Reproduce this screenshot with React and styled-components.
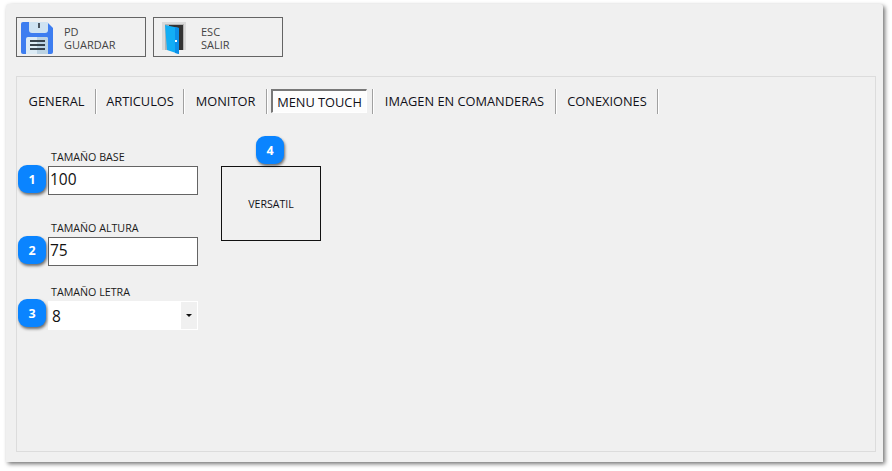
import React from 'react';
import styled, { createGlobalStyle } from 'styled-components';

const Global = createGlobalStyle`
  html, body { margin: 0; padding: 0; background: #fff; }
  body { font-family: "Open Sans", "Noto Sans", sans-serif; color: #101018; }
`;

const Page = styled.div`
  width: 892px;
  height: 471px;
  padding: 4px 0 0 6px;
  box-sizing: border-box;
  overflow: hidden;
`;

const Window = styled.div`
  width: 877px;
  height: 458px;
  box-sizing: border-box;
  background: #f0f0f0;
  border-radius: 3px 3px 0 0;
  box-shadow: 2px 2px 4px rgba(0, 0, 0, 0.55);
  padding: 13px 7px 10px 10px;
  display: flex;
  flex-direction: column;
`;

const Toolbar = styled.div`
  display: flex;
  gap: 7px;
  height: 40px;
  margin-bottom: 19px;
`;

const ToolButton = styled.div`
  width: 130px;
  height: 40px;
  box-sizing: border-box;
  border: 1px solid #646464;
  display: flex;
  align-items: center;
  padding-left: 4px;
`;

const ToolIcon = styled.svg`
  width: 32px;
  height: 32px;
  flex: none;
  margin-top: 2px;
`;

const ToolText = styled.div`
  margin: 2px 0 0 11px;
  font-size: 11px;
  line-height: 13px;
  color: #444;
`;

const Panel = styled.div`
  flex: 1;
  border: 1px solid #dcdcdc;
  padding: 12px 0 0 0;
  display: flex;
  flex-direction: column;
`;

const Tabs = styled.div`
  display: flex;
  height: 25px;
`;

const Tab = styled.div`
  width: ${p => p.$w}px;
  box-sizing: border-box;
  padding-left: 1px;
  border-right: 1px solid #a0a0a0;
  box-shadow: 1px 0 0 #fff;
  font-size: 12.8px;
  line-height: 25px;
  text-align: center;
  white-space: nowrap;
`;

const ActiveTab = styled.div`
  width: 96px;
  height: 24px;
  margin: 0 0 0 4px;
  box-sizing: border-box;
  border: 1px solid #fff;
  border-top: 2px solid #787878;
  border-left: 2px solid #787878;
  background: #fdfdfd;
  font-size: 12.8px;
  line-height: 23px;
  text-align: center;
  white-space: nowrap;
`;

const Body = styled.div`
  display: flex;
  margin-top: 36px;
  padding-left: 31px;
  gap: 23px;
`;

const Fields = styled.div`
  width: 150px;
  display: flex;
  flex-direction: column;
`;

const Field = styled.div`
  position: relative;
  margin-top: ${p => p.$top || 0}px;
`;

const Label = styled.div`
  font-size: 10.7px;
  line-height: 14px;
  height: 14px;
  margin-left: 3px;
  margin-bottom: 2px;
  color: #1a1a1a;
`;

const TextBox = styled.div`
  height: 29px;
  box-sizing: border-box;
  background: #fff;
  border: 1px solid #646464;
  font-size: 15.5px;
  line-height: 25px;
  padding-left: 1px;
  color: #111;
`;

const SelectBox = styled.div`
  height: 29px;
  background: #fff;
  display: flex;
  font-size: 15.5px;
  line-height: 30px;
  padding-left: 4px;
  color: #111;
`;

const SelectValue = styled.div`
  flex: 1;
`;

const SelectArrow = styled.div`
  width: 16px;
  margin: 1px 1px 1px 0;
  background: #f0f0f0;
  display: flex;
  align-items: center;
  justify-content: center;
  &::after {
    content: '';
    border-left: 3px solid transparent;
    border-right: 3px solid transparent;
    border-top: 3px solid #111;
  }
`;

const Badge = styled.div`
  position: absolute;
  left: ${p => p.$left}px;
  top: ${p => p.$top}px;
  width: 28px;
  height: 28px;
  border-radius: 9px;
  background: #0a84ff;
  color: #fff;
  font-size: 12.5px;
  font-weight: 700;
  line-height: 29px;
  text-align: center;
  box-shadow: 1px 2px 3px rgba(0, 0, 0, 0.55);
`;

const PreviewWrap = styled.div`
  position: relative;
  margin-top: 16px;
`;

const Preview = styled.div`
  width: 100px;
  height: 75px;
  box-sizing: border-box;
  border: 1px solid #111;
  font-size: 10.6px;
  display: flex;
  align-items: center;
  justify-content: center;
`;

const SaveIcon = () => (
  <ToolIcon viewBox="0 0 32 32">
    <path d="M2 0h24l6 6v24a2 2 0 0 1-2 2H2a2 2 0 0 1-2-2V2a2 2 0 0 1 2-2z" fill="#3d7df0" />
    <path d="M8 0h19v8a3 3 0 0 1-3 3H11a3 3 0 0 1-3-3z" fill="#cfe3f2" />
    <rect x="17" y="1" width="2" height="5" fill="#4a5560" />
    <path d="M5 17a2 2 0 0 1 2-2h18a2 2 0 0 1 2 2v15H5z" fill="#dcebf5" />
    <path d="M16 15h9a2 2 0 0 1 2 2v15H16z" fill="#bcd3e3" />
    <path d="M9 18h15v2H9zM9 22h15v2H9zM9 26h15v2H9z" fill="#36424d" />
  </ToolIcon>
);

const DoorIcon = () => (
  <ToolIcon viewBox="0 0 32 32">
    <rect x="4" y="0" width="24" height="28" fill="#dadada" />
    <rect x="7" y="2" width="19" height="26" fill="#b4b4b4" />
    <rect x="11" y="3" width="14" height="25" fill="#333" />
    <path d="M7 3l14 3v26L9 28z" fill="#12aef5" />
    <path d="M21 6v26l-4-1V5z" fill="#0c8fe8" />
    <rect x="17" y="18" width="2" height="2" fill="#fff" />
  </ToolIcon>
);

export default function App() {
  return (
    <Page>
      <Global />
      <Window>
        <Toolbar>
          <ToolButton>
            <SaveIcon />
            <ToolText>PD<br />GUARDAR</ToolText>
          </ToolButton>
          <ToolButton>
            <DoorIcon />
            <ToolText>ESC<br />SALIR</ToolText>
          </ToolButton>
        </Toolbar>
        <Panel>
          <Tabs>
            <Tab $w={79}>GENERAL</Tab>
            <Tab $w={88}>ARTICULOS</Tab>
            <Tab $w={83}>MONITOR</Tab>
            <ActiveTab>MENU TOUCH</ActiveTab>
            <Tab $w={6} />
            <Tab $w={183}>IMAGEN EN COMANDERAS</Tab>
            <Tab $w={102}>CONEXIONES</Tab>
          </Tabs>
          <Body>
            <Fields>
              <Field>
                <Label>TAMAÑO BASE</Label>
                <TextBox>100</TextBox>
                <Badge $left={-30} $top={15}>1</Badge>
              </Field>
              <Field $top={26}>
                <Label>TAMAÑO ALTURA</Label>
                <TextBox>75</TextBox>
                <Badge $left={-30} $top={15}>2</Badge>
              </Field>
              <Field $top={19}>
                <Label>TAMAÑO LETRA</Label>
                <SelectBox>
                  <SelectValue>8</SelectValue>
                  <SelectArrow />
                </SelectBox>
                <Badge $left={-30} $top={14}>3</Badge>
              </Field>
            </Fields>
            <PreviewWrap>
              <Preview>VERSATIL</Preview>
              <Badge $left={35} $top={-30}>4</Badge>
            </PreviewWrap>
          </Body>
        </Panel>
      </Window>
    </Page>
  );
}
